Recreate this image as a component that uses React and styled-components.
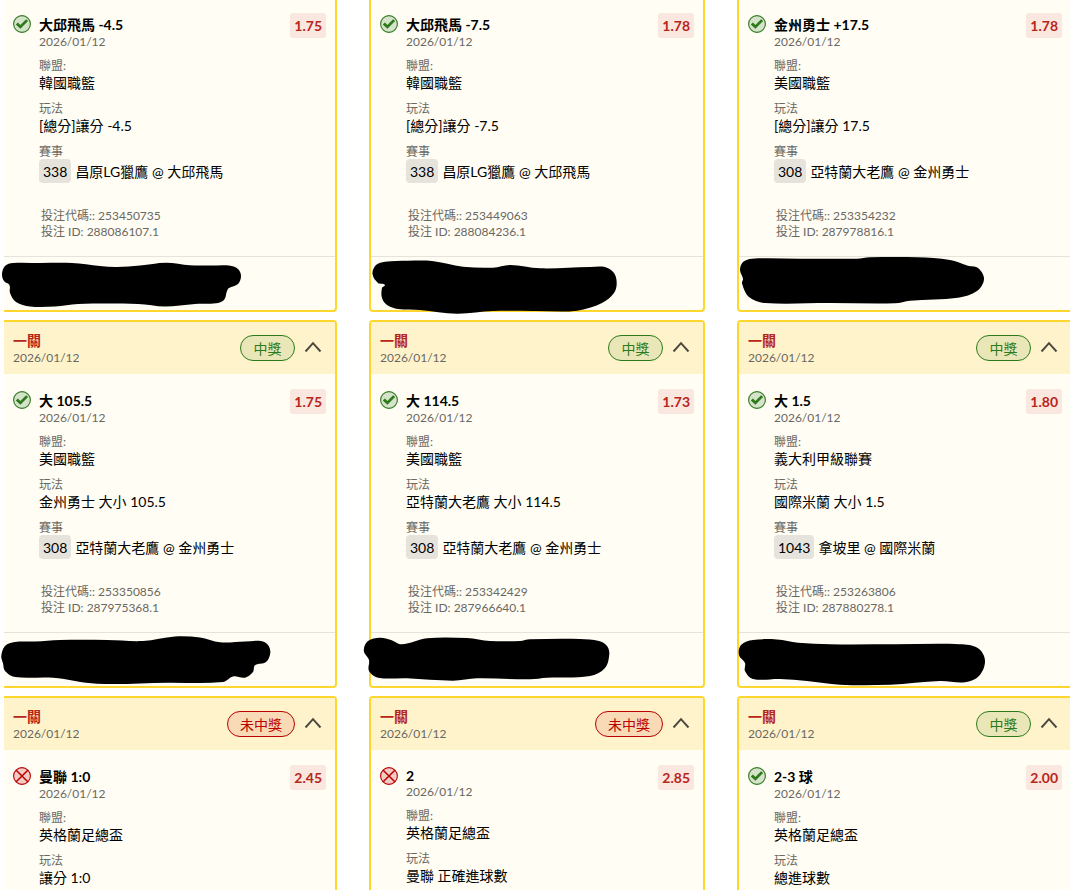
import React from "react";
import styled, { createGlobalStyle, css } from "styled-components";

const GlobalStyle = createGlobalStyle`
  *, *::before, *::after { box-sizing: border-box; }
  body {
    margin: 0;
    background: #fff;
    color: #000;
    font-family: Lato, "Noto Sans CJK TC", sans-serif;
    font-size: 14px;
  }
`;

const Page = styled.main`
  height: 100vh;
  overflow: hidden;
`;

const BetGrid = styled.div`
  display: grid;
  grid-template-columns: repeat(3, minmax(0, 1fr));
  grid-template-rows: auto auto 1fr;
  gap: 8px 32px;
  height: 100%;
  margin: -2px -3px 0 1px;
`;

const Card = styled.article`
  display: flex;
  flex-direction: column;
  background: #fffdf4;
  border: 2px solid #ffd62e;
  border-radius: 4px;
  ${({ $cutTop }) => $cutTop && css`
    border-top: none;
    border-top-left-radius: 0;
    border-top-right-radius: 0;
  `}
  ${({ $cutBottom }) => $cutBottom && css`
    border-bottom: none;
    border-bottom-left-radius: 0;
    border-bottom-right-radius: 0;
  `}
  ${({ $cutLeft }) => $cutLeft && css`
    border-left: none;
    border-top-left-radius: 0;
    border-bottom-left-radius: 0;
    margin-left: 3px;
  `}
`;

const CardHeader = styled.header`
  display: flex;
  align-items: center;
  height: 52px;
  padding: 0 9px;
  background: #fff3cc;
`;

const HeaderText = styled.div`
  flex: 1;
  padding-top: 2px;
`;

const Parlay = styled.h2`
  margin: 0;
  font-size: 14px;
  line-height: 18px;
  font-weight: 700;
  color: #b8261a;
`;

const DateText = styled.time`
  display: block;
  font-size: 12px;
  line-height: 16px;
  color: #6a6862;
`;

const StatusBadge = styled.span`
  min-width: 55px;
  height: 26px;
  padding: 0 12px;
  border: 1px solid;
  border-radius: 13px;
  font-size: 14px;
  line-height: 26px;
  text-align: center;
  color: ${({ $won }) => ($won ? "#2c7a1c" : "#ba0000")};
  background: ${({ $won }) => ($won ? "#e9e7b8" : "#f8dab6")};
`;

const ToggleButton = styled.button`
  display: flex;
  margin: 0 4px 2px 9px;
  padding: 0;
  border: 0;
  background: none;
  cursor: pointer;
`;

const CardBody = styled.div`
  display: flex;
  align-items: flex-start;
  padding: 15px 9px 16px;
`;

const ResultIcon = styled.svg`
  flex: none;
  width: 18px;
  height: 18px;
  margin: 2px 8px 0 0;
`;

const Details = styled.div`
  flex: 1;
  min-width: 0;
  padding-top: 3px;
`;

const Selection = styled.h3`
  margin: 0;
  font-size: 14px;
  line-height: ${({ $latin }) => ($latin ? 16 : 18)}px;
  font-weight: 700;
`;

const Odds = styled.strong`
  flex: none;
  padding: 0 4px;
  border-radius: 3px;
  background: #f9e7e0;
  color: #b8261a;
  font-size: 14px;
  line-height: 25px;
  font-weight: 700;
`;

const Facts = styled.dl`
  margin: 0;
`;

const FactLabel = styled.dt`
  margin-top: 8px;
  font-size: 12px;
  line-height: 15px;
  color: #6a6862;
`;

const FactValue = styled.dd`
  margin: 0;
  line-height: 20px;
`;

const MatchValue = styled(FactValue)`
  display: flex;
  gap: 4px;
  line-height: 22px;

  > span {
    padding-top: 2px;
  }
`;

const MatchCode = styled.span`
  padding: 0 4px;
  border-radius: 4px;
  background: #e6e3dd;
`;

const Reference = styled.div`
  margin: 25px 0 0 2px;
  font-size: 12px;
  line-height: 16px;
  color: #6a6862;
`;

const CardFooter = styled.footer`
  position: relative;
  height: 54px;
  border-top: 1px solid #e6e3dd;
`;

const Scribble = styled.svg`
  position: absolute;
  left: -10px;
  top: 0;
  width: 300px;
  height: 60px;
  overflow: visible;
`;

// Closed smooth outline through the points (Catmull-Rom turned into Beziers).
function outline(points) {
  const n = points.length;
  const at = (i) => points[(i + n) % n];
  let d = `M${at(0)[0]} ${at(0)[1]}`;
  for (let i = 0; i < n; i += 1) {
    const [p0, p1, p2, p3] = [at(i - 1), at(i), at(i + 1), at(i + 2)];
    const chord = Math.hypot(p2[0] - p1[0], p2[1] - p1[1]);
    const handle = (a, b) => {
      const len = Math.hypot(b[0] - a[0], b[1] - a[1]) || 1;
      return [((b[0] - a[0]) / len) * chord / 3, ((b[1] - a[1]) / len) * chord / 3];
    };
    const h1 = handle(p0, p2);
    const h2 = handle(p1, p3);
    d += `C${p1[0] + h1[0]} ${p1[1] + h1[1]} ${p2[0] - h2[0]} ${p2[1] - h2[1]} ${p2[0]} ${p2[1]}`;
  }
  return `${d}Z`;
}

const BETS = [
  {
    won: true, title: "大邱飛馬 -4.5", odds: "1.75", league: "韓國職籃", market: "[總分]讓分 -4.5",
    code: "338", match: "昌原LG獵鷹 @ 大邱飛馬", betCode: "253450735", betId: "288086107.1",
    view: "-6 257 300 60",
    ink: [[13, 263], [40, 263], [72, 263], [100, 266], [117, 267], [140, 265.5], [166, 262.7], [190, 265.3], [210, 265.5], [229, 265.5], [238, 269], [241, 276], [238, 284], [229, 288], [227, 291], [224, 300], [216, 303.3], [195, 304], [165, 306.5], [138, 304], [78, 304], [55, 306.5], [30, 306.5], [16, 302], [10, 293], [9.5, 285], [4, 281], [2, 274], [5, 266]],
  },
  {
    won: true, title: "大邱飛馬 -7.5", odds: "1.78", league: "韓國職籃", market: "[總分]讓分 -7.5",
    code: "338", match: "昌原LG獵鷹 @ 大邱飛馬", betCode: "253449063", betId: "288084236.1",
    view: "361 257 300 60",
    ink: [[385, 261.7], [408, 260.7], [432, 261], [463, 266.7], [493, 267.7], [510, 265], [540, 268.3], [590, 267], [605, 267], [614, 273], [616.7, 283], [614, 293], [602, 303], [577, 310.7], [535, 311], [493, 311], [457, 313.7], [420, 310], [398, 309], [387, 305], [382, 298], [382, 288], [385, 285], [378, 283], [372.5, 274], [376, 265]],
  },
  {
    won: true, title: "金州勇士 +17.5", odds: "1.78", league: "美國職籃", market: "[總分]讓分 17.5",
    code: "308", match: "亞特蘭大老鷹 @ 金州勇士", betCode: "253354232", betId: "287978816.1",
    view: "729 257 300 60",
    ink: [[752, 258.7], [800, 258.7], [857, 258.7], [870, 257.3], [917, 257.3], [950, 260], [968, 265.7], [978, 268], [984, 279], [977, 291], [958, 297.7], [910, 300.7], [895, 303.3], [830, 303], [765, 303], [749, 297], [742, 283.5], [743, 278.7], [740, 270], [743, 262]],
  },
  {
    won: true, header: true, title: "大 105.5", odds: "1.75", league: "美國職籃", market: "金州勇士 大小 105.5",
    code: "308", match: "亞特蘭大老鷹 @ 金州勇士", betCode: "253350856", betId: "287975368.1",
    view: "-6 633 300 60",
    ink: [[15, 642], [35, 641.5], [60, 640], [107, 640], [143, 641], [175, 636.5], [200, 637.5], [220, 642.3], [245, 641.5], [261, 641], [268, 645], [270.3, 653], [266, 662], [255, 665.3], [253, 672], [245, 677.7], [233, 676.5], [223, 682], [167, 682.7], [97, 683.7], [53, 677.7], [15, 677], [5, 671], [3, 663.3], [1.3, 656], [5, 646]],
  },
  {
    won: true, header: true, title: "大 114.5", odds: "1.73", league: "美國職籃", market: "亞特蘭大老鷹 大小 114.5",
    code: "308", match: "亞特蘭大老鷹 @ 金州勇士", betCode: "253342429", betId: "287966640.1",
    view: "361 633 300 60",
    ink: [[380, 637.7], [391, 640], [401.7, 644.3], [427, 638.2], [467, 638], [490, 641], [520, 641], [530, 639.3], [580, 638.9], [599, 641], [607, 646], [609.3, 654], [605, 668], [590, 676], [547, 677.7], [530, 679.3], [477, 678.3], [453, 680.7], [407, 678.3], [378, 677.7], [369, 671], [369, 660], [363.8, 650.7], [368, 641]],
  },
  {
    won: true, header: true, title: "大 1.5", odds: "1.80", league: "義大利甲級聯賽", market: "國際米蘭 大小 1.5",
    code: "1043", match: "拿坡里 @ 國際米蘭", betCode: "253263806", betId: "287880278.1",
    view: "729 633 300 60",
    ink: [[753, 640], [777, 639.5], [798, 642.7], [830, 644.3], [895, 644.3], [960, 644.3], [978, 648.3], [985, 660.7], [979, 676], [965, 682.3], [940, 681], [890, 684.7], [840, 684.7], [807, 681], [780, 679], [753, 679], [745, 671], [745, 663], [739, 655], [741, 645]],
  },
  { won: false, header: true, title: "曼聯 1:0", odds: "2.45", league: "英格蘭足總盃", market: "讓分 1:0" },
  { won: false, header: true, title: "2", latin: true, odds: "2.85", league: "英格蘭足總盃", market: "曼聯 正確進球數" },
  { won: true, header: true, title: "2-3 球", odds: "2.00", league: "英格蘭足總盃", market: "總進球數" },
];

function Result({ won }) {
  return won ? (
    <ResultIcon viewBox="0 0 18 18" role="img" aria-label="中獎">
      <circle cx="9" cy="9" r="8.4" fill="#d5e3cb" stroke="#2f7a20" strokeWidth="1.1" />
      <path d="M2.8 9.4 4.9 7.6 7.4 9.9 13.1 4.3 15.1 6.1 7.4 13.8Z" fill="#2c7a1c" />
    </ResultIcon>
  ) : (
    <ResultIcon viewBox="0 0 18 18" role="img" aria-label="未中獎">
      <circle cx="9" cy="9" r="8.4" fill="#f2cbc4" stroke="#ba0000" strokeWidth="1.1" />
      <path d="M3.2 3.2 14.8 14.8M14.8 3.2 3.2 14.8" stroke="#ba0000" strokeWidth="1.5" />
    </ResultIcon>
  );
}

function BetCard({ bet, index }) {
  return (
    <Card $cutTop={!bet.header} $cutBottom={!bet.betId} $cutLeft={index % 3 === 0}>
      {bet.header && (
        <CardHeader>
          <HeaderText>
            <Parlay>一關</Parlay>
            <DateText>2026/01/12</DateText>
          </HeaderText>
          <StatusBadge $won={bet.won}>{bet.won ? "中獎" : "未中獎"}</StatusBadge>
          <ToggleButton type="button" aria-label="收合" aria-expanded="true">
            <svg width="18" height="12" viewBox="0 0 18 12" fill="none">
              <path d="M1.5 10.5 9 2.2 16.5 10.5" stroke="#4c473c" strokeWidth="1.9" />
            </svg>
          </ToggleButton>
        </CardHeader>
      )}
      <CardBody>
        <Result won={bet.won} />
        <Details>
          <Selection $latin={bet.latin}>{bet.title}</Selection>
          <DateText>2026/01/12</DateText>
          <Facts>
            <FactLabel>聯盟:</FactLabel>
            <FactValue>{bet.league}</FactValue>
            <FactLabel>玩法</FactLabel>
            <FactValue>{bet.market}</FactValue>
            {bet.match && (
              <>
                <FactLabel>賽事</FactLabel>
                <MatchValue>
                  <MatchCode>{bet.code}</MatchCode>
                  <span>{bet.match}</span>
                </MatchValue>
              </>
            )}
          </Facts>
          {bet.betId && (
            <Reference>
              <div>投注代碼:: {bet.betCode}</div>
              <div>投注 ID: {bet.betId}</div>
            </Reference>
          )}
        </Details>
        <Odds>{bet.odds}</Odds>
      </CardBody>
      {bet.ink && (
        <CardFooter>
          <Scribble viewBox={bet.view} aria-hidden="true">
            <path d={outline(bet.ink)} fill="#000" />
          </Scribble>
        </CardFooter>
      )}
    </Card>
  );
}

export default function App() {
  return (
    <>
      <GlobalStyle />
      <Page>
        <BetGrid>
          {BETS.map((bet, index) => (
            <BetCard key={index} bet={bet} index={index} />
          ))}
        </BetGrid>
      </Page>
    </>
  );
}
